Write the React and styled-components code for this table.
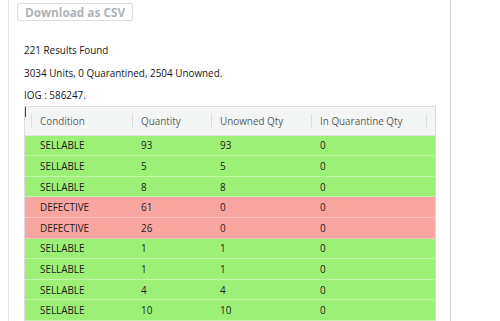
import React from "react";
import styled, { createGlobalStyle } from "styled-components";

const Global = createGlobalStyle`
  html, body { margin: 0; padding: 0; background: #fff; }
  body { font-family: "Open Sans", "Noto Sans", sans-serif; color: #161616; }
`;

const Panel = styled.div`
  margin-left: 8px;
  width: 443px;
  height: 321px;
  box-sizing: border-box;
  border-left: 1px solid #e6e6e6;
  border-right: 1px solid #d9d9d9;
  overflow: hidden;
  display: flex;
  flex-direction: column;
`;

const CsvButton = styled.button`
  margin: 3px 0 0 8px;
  width: 116px;
  height: 21px;
  box-sizing: border-box;
  border: 1px solid #dedede;
  border-radius: 2px;
  background: #fff;
  color: #aeb3b8;
  font-family: inherit;
  font-weight: 700;
  font-size: 11.8px;
  padding: 0;
  cursor: default;
`;

const Summary = styled.div`
  display: flex;
  flex-direction: column;
  gap: 7.5px;
  padding: 22px 0 0 15px;
`;

const Line = styled.p`
  margin: 0;
  font-size: 9.9px;
  line-height: 15px;
  color: #161616;
`;

const TableWrap = styled.div`
  position: relative;
  margin: 2.5px 0 0 15px;
  width: 412px;
  box-sizing: border-box;
  border: 1px solid #dcdcdc;
  border-bottom: none;
  overflow: hidden;
  flex-shrink: 0;
`;

const Caret = styled.span`
  position: absolute;
  left: -1px;
  top: -1px;
  width: 1.5px;
  height: 11px;
  background: #4a4a4a;
`;

const cols = "6px 101px 79px 100px 115px 120px";

const HeadRow = styled.div`
  display: grid;
  grid-template-columns: ${cols};
  height: 29px;
  box-sizing: border-box;
  background: #f4f5f5;
  border-bottom: 1px solid #e4e4e4;
  align-items: center;
`;

const HeadCell = styled.div`
  position: relative;
  height: 100%;
  display: flex;
  align-items: center;
  padding-left: 9px;
  font-size: 9.9px;
  color: #5b5f63;
  white-space: ${(p) => (p.$wrap ? "normal" : "nowrap")};
  line-height: ${(p) => (p.$wrap ? "14px" : "normal")};
  &::before {
    content: "";
    display: ${(p) => (p.$noSep ? "none" : "block")};
    position: absolute;
    left: 0;
    top: 7px;
    bottom: 7px;
    width: 1px;
    background: #dcdfe1;
  }
`;

const Row = styled.div`
  display: grid;
  grid-template-columns: ${cols};
  height: 20.6px;
  box-sizing: border-box;
  align-items: center;
  background: ${(p) => (p.$bad ? "#f8a6a0" : "#9df077")};
  border-bottom: 1px solid ${(p) => (p.$bad ? "#f9c3bf" : "#c4f3ad")};
`;

const Cell = styled.div`
  padding-left: 9px;
  font-size: 9.9px;
  color: #1b1b1b;
  white-space: nowrap;
`;

const rows = [
  ["SELLABLE", 93, 93, 0],
  ["SELLABLE", 5, 5, 0],
  ["SELLABLE", 8, 8, 0],
  ["DEFECTIVE", 61, 0, 0],
  ["DEFECTIVE", 26, 0, 0],
  ["SELLABLE", 1, 1, 0],
  ["SELLABLE", 1, 1, 0],
  ["SELLABLE", 4, 4, 0],
  ["SELLABLE", 10, 10, 0],
];

export default function App() {
  return (
    <>
      <Global />
      <Panel>
        <CsvButton>Download as CSV</CsvButton>
        <Summary>
          <Line>221 Results Found</Line>
          <Line>3034 Units, 0 Quarantined, 2504 Unowned.</Line>
          <Line>IOG : 586247.</Line>
        </Summary>
        <TableWrap>
          <Caret />
          <HeadRow>
            <HeadCell $noSep />
            <HeadCell>Condition</HeadCell>
            <HeadCell>Quantity</HeadCell>
            <HeadCell>Unowned Qty</HeadCell>
            <HeadCell>In Quarantine Qty</HeadCell>
            <HeadCell $wrap>Unsellable Qty</HeadCell>
          </HeadRow>
          {rows.map((r, i) => (
            <Row key={i} $bad={r[0] === "DEFECTIVE"}>
              <Cell />
              <Cell>{r[0]}</Cell>
              <Cell>{r[1]}</Cell>
              <Cell>{r[2]}</Cell>
              <Cell>{r[3]}</Cell>
              <Cell />
            </Row>
          ))}
        </TableWrap>
      </Panel>
    </>
  );
}
